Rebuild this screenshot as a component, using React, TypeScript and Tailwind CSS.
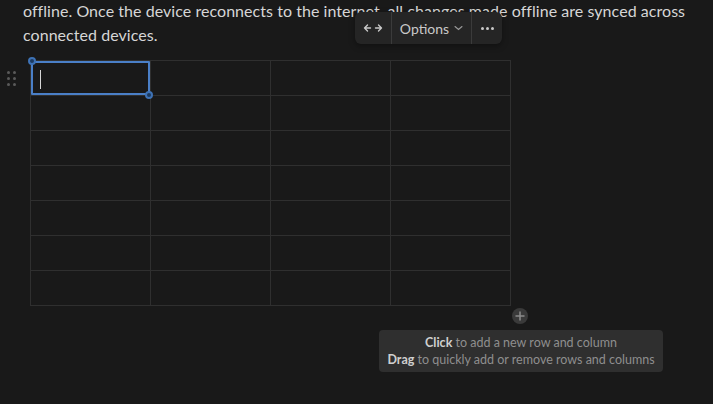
import React from 'react'

const ROWS = 7
const COLS = 4

function DragHandle() {
  return (
    <div className="grid grid-cols-[3px_3px] gap-x-[3px] gap-y-[3px] w-[9px] h-[13px]">
      {Array.from({ length: 6 }).map((_, i) => (
        <span key={i} className="w-[3px] h-[3px] rounded-full bg-[#5a5a5a]" />
      ))}
    </div>
  )
}

function Toolbar() {
  return (
    <div className="absolute left-[355px] top-[12px] h-[32px] flex items-stretch rounded-[6px] bg-[#252525] text-[#c9c9c9] shadow-[0_2px_6px_rgba(0,0,0,0.35)]">
      <div className="w-[36px] flex items-center justify-center">
        <svg width="20" height="10" viewBox="0 0 20 10" fill="none" stroke="#c9c9c9" strokeWidth="1.4" strokeLinecap="round" strokeLinejoin="round">
          <path d="M1.5 5h6M4.5 2L1.5 5l3 3" />
          <path d="M12.5 5h6M15.5 2l3 3-3 3" />
        </svg>
      </div>
      <div className="w-[1px] bg-[#3b3b3b]" />
      <div className="w-[79px] flex items-center justify-center gap-[5px] text-[14px]">
        <span>Options</span>
        <svg width="9" height="6" viewBox="0 0 9 6" fill="none" stroke="#9a9a9a" strokeWidth="1.1" strokeLinecap="round">
          <path d="M1 1.5l3.5 3 3.5-3" />
        </svg>
      </div>
      <div className="w-[1px] bg-[#3b3b3b]" />
      <div className="w-[30px] flex items-center justify-center gap-[2px]">
        <span className="w-[3px] h-[3px] rounded-full bg-[#c9c9c9]" />
        <span className="w-[3px] h-[3px] rounded-full bg-[#c9c9c9]" />
        <span className="w-[3px] h-[3px] rounded-full bg-[#c9c9c9]" />
      </div>
    </div>
  )
}

export default function App() {
  return (
    <div
      className="relative w-[713px] h-[404px] overflow-hidden bg-[#191919] text-[#d6d6d6]"
      style={{ fontFamily: 'Lato, "Liberation Sans", sans-serif' }}
    >
      {/* paragraph */}
      <p className="pl-[23px] pr-[20px] text-[16px] leading-[24px] tracking-[0.05px] -mt-[1px]">
        offline. Once the device reconnects to the internet, all changes made offline are synced across connected devices.
      </p>

      {/* table block */}
      <div className="relative flex items-start mt-[13px]">
        <div className="w-[30px] flex items-start pt-[11px] pl-[7px]">
          <DragHandle />
        </div>
        <div className="relative">
          <div className="grid grid-cols-[repeat(4,120px)] border-t border-l border-[#2f2f2f]">
            {Array.from({ length: ROWS * COLS }).map((_, i) => (
              <div key={i} className="h-[35px] border-r border-b border-[#2f2f2f]" />
            ))}
          </div>

          {/* selected cell */}
          <div className="absolute left-[1px] top-[1px] w-[119px] h-[34px] border-2 border-[#4a7fc7] rounded-[1px]">
            <span className="absolute left-[7px] top-[7px] w-[1px] h-[19px] bg-[#d6d6d6]" />
          </div>
          <span className="absolute left-[-2px] top-[-3px] w-[8px] h-[8px] rounded-full bg-[#1c3a60] border-[2px] border-[#3e72b5]" />
          <span className="absolute left-[115px] top-[31px] w-[8px] h-[8px] rounded-full bg-[#1c3a60] border-[2px] border-[#3e72b5]" />
        </div>
      </div>

      <Toolbar />

      {/* add button */}
      <div className="absolute left-[512px] top-[308px] w-[16px] h-[16px] rounded-full bg-[#3a3a3a] flex items-center justify-center">
        <svg width="10" height="10" viewBox="0 0 10 10" stroke="#8c8c8c" strokeWidth="1.5">
          <path d="M5 0.5v9M0.5 5h9" />
        </svg>
      </div>

      {/* tooltip */}
      <div className="absolute left-[379px] top-[330px] w-[284px] h-[42px] rounded-[4px] bg-[#2f2f2f] flex flex-col items-center justify-center text-[12.5px] leading-[17px] text-[#8e8e8e]">
        <div>
          <span className="font-bold text-[#cfcfcf]">Click</span> to add a new row and column
        </div>
        <div>
          <span className="font-bold text-[#cfcfcf]">Drag</span> to quickly add or remove rows and columns
        </div>
      </div>
    </div>
  )
}
